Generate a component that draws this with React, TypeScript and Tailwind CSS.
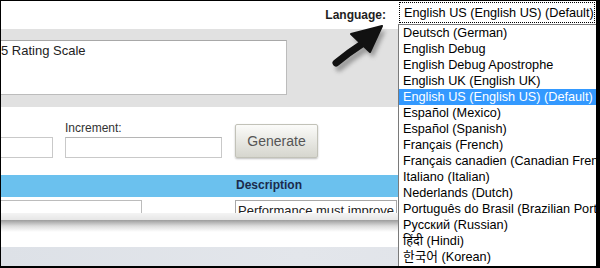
const languages = [
  "Deutsch (German)",
  "English Debug",
  "English Debug Apostrophe",
  "English UK (English UK)",
  "English US (English US) (Default)",
  "Español (Mexico)",
  "Español (Spanish)",
  "Français (French)",
  "Français canadien (Canadian French)",
  "Italiano (Italian)",
  "Nederlands (Dutch)",
  "Português do Brasil (Brazilian Portuguese)",
  "Русский (Russian)",
  "हिंदी (Hindi)",
  "한국어 (Korean)",
];

const selected = "English US (English US) (Default)";

function PointerArrow() {
  return (
    <svg
      className="pointer-events-none absolute left-[322px] top-[16px]"
      width="70"
      height="60"
      viewBox="322 16 70 60"
    >
      <defs>
        <filter id="blur" x="-20%" y="-20%" width="140%" height="140%">
          <feGaussianBlur stdDeviation="2" />
        </filter>
      </defs>
      <g fill="#7d7d7d" stroke="#7d7d7d" opacity="0.7" filter="url(#blur)" transform="translate(3 5)">
        <path d="M335 62 Q347 52 361 43" fill="none" strokeWidth="7" strokeLinecap="round" />
        <polygon points="381,25 350,33 369,51" />
      </g>
      <g fill="#111" stroke="#111">
        <path d="M335 62 Q347 52 361 43" fill="none" strokeWidth="7" strokeLinecap="round" />
        <polygon points="381,25 350,33 369,51" strokeLinejoin="round" strokeWidth="2" />
      </g>
    </svg>
  );
}

function LanguageMenu() {
  return (
    <div className="absolute left-[397px] right-0 top-0 text-[12.7px] leading-[16px] text-black">
      <div className="flex h-[23px] items-center bg-white p-[1px]">
        <div className="flex h-full w-full items-center border border-dotted border-black pl-[4px] whitespace-nowrap">
          {selected}
        </div>
      </div>
      <div className="h-[243px] overflow-hidden border-l border-t border-[#7a7a7a] bg-white">
        {languages.map((lang) => (
          <div
            key={lang}
            className={
              lang === selected
                ? "h-[16px] overflow-hidden whitespace-nowrap bg-[#3399ff] pl-[4px] text-white"
                : "h-[16px] overflow-hidden whitespace-nowrap pl-[4px]"
            }
          >
            {lang}
          </div>
        ))}
      </div>
    </div>
  );
}

export default function App() {
  return (
    <div
      className="relative h-[268px] w-[600px] overflow-hidden border-b-2 border-l border-r-4 border-t border-black bg-white text-[#222]"
      style={{ fontFamily: '"Liberation Sans", Arial, "Noto Sans", "Noto Sans CJK KR", sans-serif' }}
    >
      {/* language label strip */}
      <div className="flex h-[28px] items-center justify-end pr-[210px]">
        <span className="text-[12px] font-bold text-[#1e1e1e]">Language:</span>
      </div>

      {/* scale name band */}
      <div className="h-[78px] bg-[#e1e1e1] pt-[11px]">
        <div className="h-[55px] w-[286px] border border-l-0 border-[#bcbcbc] border-t-[#a8a8a8] bg-white pt-[2px] text-[13px] leading-[16px]">
          5 Rating Scale
        </div>
      </div>

      {/* generate row */}
      <div className="flex h-[68px] items-end pb-[17px] text-[12px] text-[#333]">
        <div className="h-[21px] w-[52px] border border-l-0 border-[#c9c9c9] bg-white" />
        <div className="ml-[12px] flex w-[157px] flex-col">
          <span className="mb-[2px] leading-[14px]">Increment:</span>
          <div className="h-[21px] w-full border border-[#c9c9c9] border-t-[#b5b5b5] bg-white" />
        </div>
        <button
          type="button"
          className="ml-[13px] h-[34px] w-[83px] rounded-[2px] border border-[#c2c2b8] bg-gradient-to-b from-[#fbfbf9] to-[#d6d6ce] text-[14px] text-[#555] shadow-[0_1px_2px_rgba(0,0,0,0.25)]"
        >
          Generate
        </button>
      </div>

      {/* table header */}
      <div className="flex h-[22px] items-center bg-[#6bc1ee] pb-[2px] pl-[235px]">
        <span className="text-[12px] font-bold text-[#1b2b4c]">Description</span>
      </div>

      {/* first table row, cut off by the torn edge */}
      <div className="flex h-[16px] items-start overflow-hidden pt-[3px] text-[13px] leading-[16px]">
        <div className="h-[20px] w-[141px] border border-l-0 border-[#bcbcbc]" />
        <div className="ml-[93px] h-[20px] w-[162px] border border-[#a8a8a8] pl-[2px] pt-[2px] whitespace-nowrap">
          Performance must improve
        </div>
      </div>

      {/* torn edge */}
      <div className="h-[7px] bg-gradient-to-b from-[#f4f4f4] to-[#e6e6e6]" />
      <div className="h-[12px] bg-gradient-to-b from-[#9c9c9c] via-[#dcdcdc] to-white" />
      <div className="h-[15px] bg-white" />
      <div className="h-[19px] bg-gradient-to-r from-[#dde1e7] via-[#e3e6eb] to-[#dfe2e8]" />

      <PointerArrow />
      <LanguageMenu />
    </div>
  );
}
